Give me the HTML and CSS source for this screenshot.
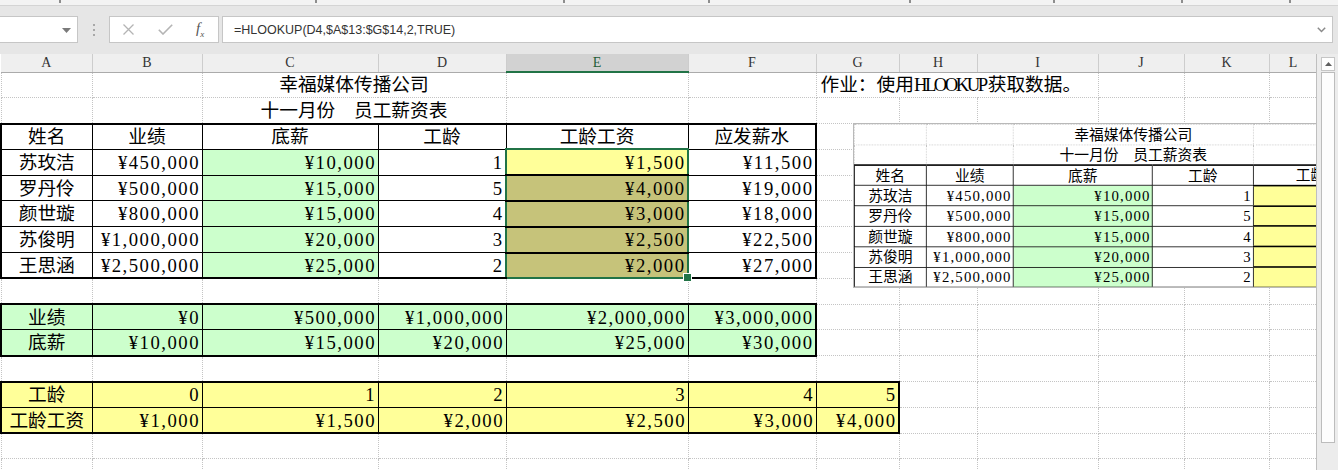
FILE: index.html
```html
<!DOCTYPE html>
<html lang="zh-CN">
<head>
    <meta charset="UTF-8">
    <title>员工薪资表 - HLOOKUP</title>
    <link rel="stylesheet" href="styles.css">
</head>
<body>
    <div class="ribbon-edge">
        <span></span><span></span><span></span><span></span>
        <span></span><span></span><span></span><span></span>
    </div>

    <div class="formula-bar">
        <div class="name-box">
            <svg class="drop" width="9" height="5" viewBox="0 0 9 5"><path d="M0 0h9L4.5 5z" fill="#7a7a7a"/></svg>
        </div>
        <div class="grip"><i></i><i></i><i></i></div>
        <div class="fx-buttons">
            <svg class="cancel" width="11" height="11" viewBox="0 0 11 11"><path d="M0.5 0.5l10 10M10.5 0.5l-10 10" stroke="#b4b4b4" stroke-width="1.3" fill="none"/></svg>
            <svg class="enter" width="15" height="11" viewBox="0 0 15 11"><path d="M0.8 5.8l4.2 4.2L14.2 0.8" stroke="#b4b4b4" stroke-width="1.6" fill="none"/></svg>
            <span class="fx"><i>f</i><sub>x</sub></span>
        </div>
        <div class="formula-input">
            <span class="formula">=HLOOKUP(D4,$A$13:$G$14,2,TRUE)</span>
            <svg width="9" height="6" viewBox="0 0 9 6"><path d="M0.8 0.8l3.7 3.7 3.7-3.7" stroke="#8a8a8a" stroke-width="1.5" fill="none"/></svg>
        </div>
    </div>

    <div class="sheet">
        <div class="viewport">
            <table class="grid">
                <colgroup>
                    <col class="ca"><col class="cb"><col class="cc"><col class="cd"><col class="ce"><col class="cf">
                    <col class="cg"><col class="ch"><col class="ci"><col class="cj"><col class="ck"><col class="cl">
                </colgroup>
                <thead>
                    <tr>
                        <th>A</th><th>B</th><th>C</th><th>D</th><th class="active">E</th><th>F</th>
                        <th>G</th><th>H</th><th>I</th><th>J</th><th>K</th><th>L</th>
                    </tr>
                </thead>
                <tbody>
                    <tr>
                        <td></td><td></td><td colspan="2" class="c">幸福媒体传播公司</td><td></td><td></td>
                        <td colspan="3" class="note">作业：使用<span class="latin">HLOOKUP</span>获取数据。</td><td></td><td></td><td></td>
                    </tr>
                    <tr>
                        <td></td><td></td><td colspan="2" class="c">十一月份　员工薪资表</td><td></td><td></td>
                        <td></td><td></td><td></td><td></td><td></td><td></td>
                    </tr>
                    <tr class="top">
                        <td class="bx bl c">姓名</td><td class="bx c">业绩</td><td class="bx c">底薪</td><td class="bx c">工龄</td><td class="bx c">工龄工资</td><td class="bx br c">应发薪水</td>
                        <td></td><td></td><td></td><td></td><td></td><td></td>
                    </tr>
                    <tr>
                        <td class="bx bl c">苏玫洁</td><td class="bx">¥450,000</td><td class="bx g">¥10,000</td><td class="bx">1</td><td class="bx wage sel first">¥1,500</td><td class="bx br">¥11,500</td>
                        <td></td><td></td><td></td><td></td><td></td><td></td>
                    </tr>
                    <tr>
                        <td class="bx bl c">罗丹伶</td><td class="bx">¥500,000</td><td class="bx g">¥15,000</td><td class="bx">5</td><td class="bx wage sel">¥4,000</td><td class="bx br">¥19,000</td>
                        <td></td><td></td><td></td><td></td><td></td><td></td>
                    </tr>
                    <tr>
                        <td class="bx bl c">颜世璇</td><td class="bx">¥800,000</td><td class="bx g">¥15,000</td><td class="bx">4</td><td class="bx wage sel">¥3,000</td><td class="bx br">¥18,000</td>
                        <td></td><td></td><td></td><td></td><td></td><td></td>
                    </tr>
                    <tr>
                        <td class="bx bl c">苏俊明</td><td class="bx">¥1,000,000</td><td class="bx g">¥20,000</td><td class="bx">3</td><td class="bx wage sel">¥2,500</td><td class="bx br">¥22,500</td>
                        <td></td><td></td><td></td><td></td><td></td><td></td>
                    </tr>
                    <tr class="bot">
                        <td class="bx bl c">王思涵</td><td class="bx">¥2,500,000</td><td class="bx g">¥25,000</td><td class="bx">2</td><td class="bx wage sel last">¥2,000</td><td class="bx br">¥27,000</td>
                        <td></td><td></td><td></td><td></td><td></td><td></td>
                    </tr>
                    <tr>
                        <td></td><td></td><td></td><td></td><td></td><td></td>
                        <td></td><td></td><td></td><td></td><td></td><td></td>
                    </tr>
                    <tr class="top">
                        <td class="bx bl g c">业绩</td><td class="bx g">¥0</td><td class="bx g">¥500,000</td><td class="bx g">¥1,000,000</td><td class="bx g">¥2,000,000</td><td class="bx br g">¥3,000,000</td>
                        <td></td><td></td><td></td><td></td><td></td><td></td>
                    </tr>
                    <tr class="bot">
                        <td class="bx bl g c">底薪</td><td class="bx g">¥10,000</td><td class="bx g">¥15,000</td><td class="bx g">¥20,000</td><td class="bx g">¥25,000</td><td class="bx br g">¥30,000</td>
                        <td></td><td></td><td></td><td></td><td></td><td></td>
                    </tr>
                    <tr>
                        <td></td><td></td><td></td><td></td><td></td><td></td>
                        <td></td><td></td><td></td><td></td><td></td><td></td>
                    </tr>
                    <tr class="top">
                        <td class="bx bl y c">工龄</td><td class="bx y">0</td><td class="bx y">1</td><td class="bx y">2</td><td class="bx y">3</td><td class="bx y">4</td><td class="bx br y">5</td>
                        <td></td><td></td><td></td><td></td><td></td>
                    </tr>
                    <tr class="bot">
                        <td class="bx bl y c">工龄工资</td><td class="bx y">¥1,000</td><td class="bx y">¥1,500</td><td class="bx y">¥2,000</td><td class="bx y">¥2,500</td><td class="bx y">¥3,000</td><td class="bx br y">¥4,000</td>
                        <td></td><td></td><td></td><td></td><td></td>
                    </tr>
                    <tr>
                        <td></td><td></td><td></td><td></td><td></td><td></td>
                        <td></td><td></td><td></td><td></td><td></td><td></td>
                    </tr>
                    <tr>
                        <td></td><td></td><td></td><td></td><td></td><td></td>
                        <td></td><td></td><td></td><td></td><td></td><td></td>
                    </tr>
                </tbody>
            </table>

            <!-- pasted picture of A1:E8 -->
            <div class="picture">
                <table class="grid mini">
                    <colgroup>
                        <col class="ca"><col class="cb"><col class="cc"><col class="cd"><col class="ce">
                    </colgroup>
                    <tr>
                        <td></td><td></td><td colspan="2" class="c">幸福媒体传播公司</td><td></td>
                    </tr>
                    <tr>
                        <td></td><td></td><td colspan="2" class="c">十一月份　员工薪资表</td><td></td>
                    </tr>
                    <tr class="top">
                        <td class="bx c">姓名</td><td class="bx c">业绩</td><td class="bx c">底薪</td><td class="bx c">工龄</td><td class="bx c">工龄工资</td>
                    </tr>
                    <tr>
                        <td class="bx c">苏玫洁</td><td class="bx">¥450,000</td><td class="bx g">¥10,000</td><td class="bx">1</td><td class="bx wage y"></td>
                    </tr>
                    <tr>
                        <td class="bx c">罗丹伶</td><td class="bx">¥500,000</td><td class="bx g">¥15,000</td><td class="bx">5</td><td class="bx wage y"></td>
                    </tr>
                    <tr>
                        <td class="bx c">颜世璇</td><td class="bx">¥800,000</td><td class="bx g">¥15,000</td><td class="bx">4</td><td class="bx wage y"></td>
                    </tr>
                    <tr>
                        <td class="bx c">苏俊明</td><td class="bx">¥1,000,000</td><td class="bx g">¥20,000</td><td class="bx">3</td><td class="bx wage y"></td>
                    </tr>
                    <tr class="bot">
                        <td class="bx c">王思涵</td><td class="bx">¥2,500,000</td><td class="bx g">¥25,000</td><td class="bx">2</td><td class="bx wage y"></td>
                    </tr>
                </table>
            </div>
        </div>

        <div class="vscroll">
            <div class="up">
                <svg width="7" height="4" viewBox="0 0 7 4"><path d="M0 4L3.5 0 7 4z" fill="#606060"/></svg>
            </div>
            <div class="thumb"></div>
        </div>
    </div>
</body>
</html>
```

FILE: styles.css
```css
* {
    box-sizing: border-box;
}
body {
    margin: 0;
    width: 1338px;
    height: 470px;
    overflow: hidden;
    background: #fff;
    font-family: "Liberation Sans", "Noto Sans CJK SC", sans-serif;
}

/* bottom edge of the ribbon */
.ribbon-edge {
    display: flex;
    height: 6px;
    background: #f3f3f3;
    border-bottom: 1px solid #d4d4d4;
}
.ribbon-edge span {
    height: 3px;
    border-right: 2px solid #8d8d8d;
}
.ribbon-edge span:nth-child(1) { width: 61px; }
.ribbon-edge span:nth-child(2) { width: 256px; }
.ribbon-edge span:nth-child(3) { width: 248px; }
.ribbon-edge span:nth-child(4) { width: 145px; }
.ribbon-edge span:nth-child(5) { width: 201px; }
.ribbon-edge span:nth-child(6) { width: 144px; }
.ribbon-edge span:nth-child(7) { width: 128px; }
.ribbon-edge span:nth-child(8) { width: 108px; }

/* formula bar */
.formula-bar {
    display: flex;
    height: 48px;
    padding-top: 10px;
    background: #e6e6e6;
}
.name-box {
    position: relative;
    width: 78px;
    height: 27px;
    background: #fff;
    border: 1px solid #c6c6c6;
    border-left: 0;
}
.name-box .drop {
    position: absolute;
    right: 6px;
    top: 11px;
}
.grip {
    display: flex;
    flex-direction: column;
    align-items: center;
    justify-content: center;
    gap: 3px;
    width: 31px;
    height: 27px;
}
.grip i {
    width: 2px;
    height: 2px;
    background: #a8a8a8;
}
.fx-buttons {
    display: flex;
    align-items: center;
    width: 110px;
    height: 27px;
    padding-left: 13px;
    background: #fff;
    border: 1px solid #c6c6c6;
}
.fx-buttons .enter {
    margin-left: 24px;
}
.fx {
    margin-left: 23px;
    font-family: "Liberation Serif", serif;
    font-size: 15px;
    color: #555;
}
.fx sub {
    font-size: 9px;
    font-style: italic;
}
.formula-input {
    display: flex;
    align-items: center;
    justify-content: space-between;
    width: 1111px;
    height: 27px;
    margin-left: 3px;
    padding: 0 6px 0 11px;
    background: #fff;
    border: 1px solid #c6c6c6;
}
.formula {
    font-size: 12.5px;
    color: #333;
}

/* sheet */
.sheet {
    display: flex;
    height: 416px;
}
.viewport {
    position: relative;
    width: 1317px;
    overflow: hidden;
    border-right: 1px solid #bfbfbf;
}
.grid {
    table-layout: fixed;
    border-collapse: collapse;
    width: 1316px;
    font-family: "Liberation Serif", "Noto Sans CJK SC", serif;
    font-size: 18.7px;
    color: #000;
}
.ca { width: 91px; }
.cb { width: 110px; }
.cc { width: 176px; }
.cd { width: 128px; }
.ce { width: 182px; }
.cf { width: 128px; }
.cg { width: 83px; }
.ch { width: 78px; }
.ci { width: 121px; }
.cj { width: 86px; }
.ck { width: 85px; }
.cl { width: 48px; }

.grid th {
    height: 18px;
    padding: 0;
    background: #efefef;
    border-right: 1px solid #cdcdcd;
    border-bottom: 1px solid #ababab;
    font-weight: normal;
    font-size: 14px;
    line-height: 16px;
    color: #333;
}
.grid th.active {
    background: #d2d2d2;
    border-bottom: 2px solid #217346;
    color: #1e5e38;
}
.grid td {
    height: 25.8px;
    padding: 1px 1.5px 0 3px;
    border: 1px dotted #c4c4c4;
    text-align: right;
    white-space: nowrap;
    line-height: 22px;
    letter-spacing: 1.5px;
}
.grid td.c {
    text-align: center;
    letter-spacing: 0;
    padding-right: 3px;
}
.grid td.note {
    text-align: left;
    letter-spacing: 0;
    padding-left: 4px;
}
.grid td.note .latin {
    letter-spacing: -2.5px;
    margin-right: 2px;
}

/* bordered blocks */
.grid td.bx {
    border: 1px solid #000;
}
.grid .top td.bx {
    border-top: 2px solid #000;
}
.grid .bot td.bx {
    border-bottom: 2px solid #000;
}
.grid td.bx.br {
    border-right: 2px solid #000;
}
.grid td.bx.bl {
    border-left: 2px solid #000;
}
.grid td.g {
    background: #ccffcc;
}
.grid td.y {
    background: #ffff99;
}
.grid td.wage {
    border-top: 2px solid #000;
    border-bottom: 2px solid #000;
}

/* current selection E4:E8 */
.grid td.sel {
    background: #c6c37a;
    border-left: 2px solid #217346;
    border-right: 2px solid #217346;
}
.grid td.sel.first {
    background: #ffff99;
    border-top: 2px solid #217346;
}
.grid td.sel.last {
    position: relative;
    border-bottom: 2px solid #217346;
}
.grid td.sel.last::after {
    content: "";
    position: absolute;
    right: -5px;
    bottom: -5px;
    width: 7px;
    height: 7px;
    background: #217346;
    border: 1px solid #fff;
}

/* pasted picture */
.picture {
    position: absolute;
    left: 853px;
    top: 69px;
    width: 545px;
    height: 165px;
    overflow: hidden;
    background: #fff;
    border: 1px solid #b9b9b9;
}
.picture .grid {
    width: 687px;
    transform: scale(0.79);
    transform-origin: 0 0;
}

/* vertical scrollbar */
.vscroll {
    display: flex;
    flex-direction: column;
    width: 21px;
    padding: 3px 3px 0 4px;
    background: #ececec;
}
.vscroll .up {
    display: flex;
    align-items: center;
    justify-content: center;
    height: 14px;
    background: #fff;
    border: 1px solid #c6c6c6;
}
.vscroll .thumb {
    height: 371px;
    margin-top: 1px;
    background: #fdfdfd;
    border: 1px solid #bcbcbc;
}
```
